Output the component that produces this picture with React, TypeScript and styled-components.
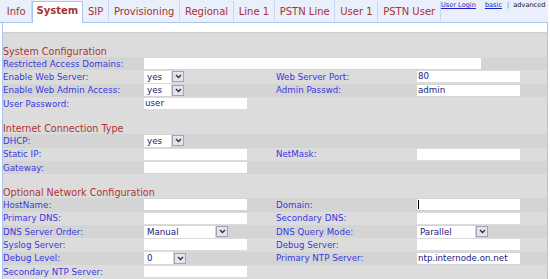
import React from 'react';
import styled, { createGlobalStyle } from 'styled-components';

const Global = createGlobalStyle`
  html, body { margin: 0; padding: 0; background: #ffffff; }
  body { font-family: "DejaVu Sans", Verdana, sans-serif; }
  * { box-sizing: border-box; }
`;

const Page = styled.div`
  width: 550px;
  height: 279px;
  overflow: hidden;
  background: #ffffff;
`;

const TabBar = styled.div`
  display: flex;
  align-items: flex-end;
  width: 548px;
  height: 23px;
  background: #e9effb;
  border-bottom: 1px solid #a9c5ef;
  padding-left: 2px;
`;

const Tab = styled.div<{ $active?: boolean }>`
  display: flex;
  justify-content: center;
  font-size: 10px;
  color: #a83232;
  white-space: nowrap;
  ${(p) =>
    p.$active
      ? `
    height: 22px;
    margin-bottom: -1px;
    background: #ffffff;
    border: 1px solid #a9c5ef;
    border-bottom: none;
    font-weight: bold;
    align-items: flex-start;
    padding: 3px 4px 0;
  `
      : `
    height: 20px;
    margin-bottom: 1px;
    align-items: center;
    padding: 1px 4.8px 0;
    border-right: 1px solid #c4d6f3;
  `}
`;

const Links = styled.div`
  align-self: flex-start;
  display: flex;
  align-items: center;
  padding: 1px 0 0 0;
  font-size: 6.6px;
  white-space: nowrap;
`;

const Link = styled.a<{ $gap: number }>`
  color: #1c1cc8;
  text-decoration: underline;
  margin-right: ${(p) => p.$gap}px;
`;

const Sep = styled.span`
  color: #777;
  margin-right: 4px;
`;

const Current = styled.span`
  color: #111;
`;

const Panel = styled.div`
  margin-left: 2px;
  width: 546px;
  height: 256px;
  border-left: 1px solid #a9c5ef;
  border-right: 1px solid #a9c5ef;
  background: #dcdcdc;
`;

const WhiteStrip = styled.div`
  height: 10px;
  background: #ffffff;
  border-bottom: 1px solid #cfcfcf;
`;

const Spacer = styled.div`
  height: 12px;
`;

const SectionTitle = styled.div`
  height: 12px;
  display: flex;
  align-items: center;
  font-size: 9.6px;
  color: #ae3434;
`;

const Row = styled.div<{ $dark?: boolean }>`
  display: grid;
  grid-template-columns: 141px 132px 141px 1fr;
  align-items: center;
  height: 13.33px;
  background: ${(p) => (p.$dark ? '#d4d4d4' : '#dcdcdc')};
`;

const Label = styled.div`
  font-size: 8.7px;
  color: #3838dc;
  white-space: nowrap;
`;

const TextInput = styled.div<{ $w?: number; $span?: boolean; $caret?: boolean }>`
  width: ${(p) => p.$w ?? 103}px;
  height: 11px;
  background: #ffffff;
  font-size: 8.7px;
  color: #20207a;
  line-height: 11px;
  padding-left: 1px;
  white-space: nowrap;
  overflow: hidden;
  ${(p) => (p.$span ? 'grid-column: 2 / 5;' : '')}
  ${(p) =>
    p.$caret
      ? `background: linear-gradient(to right, #fff 1px, #000 1px, #000 2px, #fff 2px) no-repeat 0 1px / 100% 9px, #fff;`
      : ''}
`;

const Select = styled.div`
  display: flex;
  align-items: center;
  height: 12px;
`;

const SelectValue = styled.div<{ $w: number }>`
  width: ${(p) => p.$w}px;
  height: 12px;
  background: #ffffff;
  font-size: 8.7px;
  color: #20207a;
  line-height: 12px;
  padding-left: 3px;
`;

const SelectButton = styled.div`
  width: 12px;
  height: 11px;
  margin-left: 1px;
  border: 1px solid #a3a3b8;
  background: #e4e4ec;
  display: flex;
  align-items: center;
  justify-content: center;
`;

const Chevron = () => (
  <svg width="7" height="5" viewBox="0 0 7 5">
    <path d="M1 1 L3.5 3.5 L6 1" stroke="#303040" strokeWidth="1.4" fill="none" />
  </svg>
);

const Dropdown = ({ value, w }: { value: string; w: number }) => (
  <Select>
    <SelectValue $w={w}>{value}</SelectValue>
    <SelectButton>
      <Chevron />
    </SelectButton>
  </Select>
);

const Empty = styled.div``;

const tabs = ['Info', 'System', 'SIP', 'Provisioning', 'Regional', 'Line 1', 'PSTN Line', 'User 1', 'PSTN User'];

export default function App() {
  return (
    <Page>
      <Global />
      <TabBar>
        {tabs.map((t) => (
          <Tab key={t} $active={t === 'System'}>
            {t}
          </Tab>
        ))}
        <Links>
          <Link $gap={9}>User Login</Link>
          <Link $gap={5}>basic</Link>
          <Sep>|</Sep>
          <Current>advanced</Current>
        </Links>
      </TabBar>
      <Panel>
        <WhiteStrip />
        <Spacer />
        <SectionTitle>System Configuration</SectionTitle>
        <Row $dark>
          <Label>Restricted Access Domains:</Label>
          <TextInput $w={337} $span />
        </Row>
        <Row>
          <Label>Enable Web Server:</Label>
          <Dropdown value="yes" w={27} />
          <Label>Web Server Port:</Label>
          <TextInput>80</TextInput>
        </Row>
        <Row $dark>
          <Label>Enable Web Admin Access:</Label>
          <Dropdown value="yes" w={27} />
          <Label>Admin Passwd:</Label>
          <TextInput>admin</TextInput>
        </Row>
        <Row>
          <Label>User Password:</Label>
          <TextInput>user</TextInput>
          <Empty />
          <Empty />
        </Row>
        <Spacer />
        <SectionTitle>Internet Connection Type</SectionTitle>
        <Row $dark>
          <Label>DHCP:</Label>
          <Dropdown value="yes" w={27} />
          <Empty />
          <Empty />
        </Row>
        <Row>
          <Label>Static IP:</Label>
          <TextInput />
          <Label>NetMask:</Label>
          <TextInput />
        </Row>
        <Row $dark>
          <Label>Gateway:</Label>
          <TextInput />
          <Empty />
          <Empty />
        </Row>
        <Spacer />
        <SectionTitle>Optional Network Configuration</SectionTitle>
        <Row $dark>
          <Label>HostName:</Label>
          <TextInput />
          <Label>Domain:</Label>
          <TextInput $caret />
        </Row>
        <Row>
          <Label>Primary DNS:</Label>
          <TextInput />
          <Label>Secondary DNS:</Label>
          <TextInput />
        </Row>
        <Row $dark>
          <Label>DNS Server Order:</Label>
          <Dropdown value="Manual" w={71} />
          <Label>DNS Query Mode:</Label>
          <Dropdown value="Parallel" w={58} />
        </Row>
        <Row>
          <Label>Syslog Server:</Label>
          <TextInput />
          <Label>Debug Server:</Label>
          <TextInput />
        </Row>
        <Row $dark>
          <Label>Debug Level:</Label>
          <Dropdown value="0" w={29} />
          <Label>Primary NTP Server:</Label>
          <TextInput>ntp.internode.on.net</TextInput>
        </Row>
        <Row>
          <Label>Secondary NTP Server:</Label>
          <TextInput />
          <Empty />
          <Empty />
        </Row>
      </Panel>
    </Page>
  );
}
